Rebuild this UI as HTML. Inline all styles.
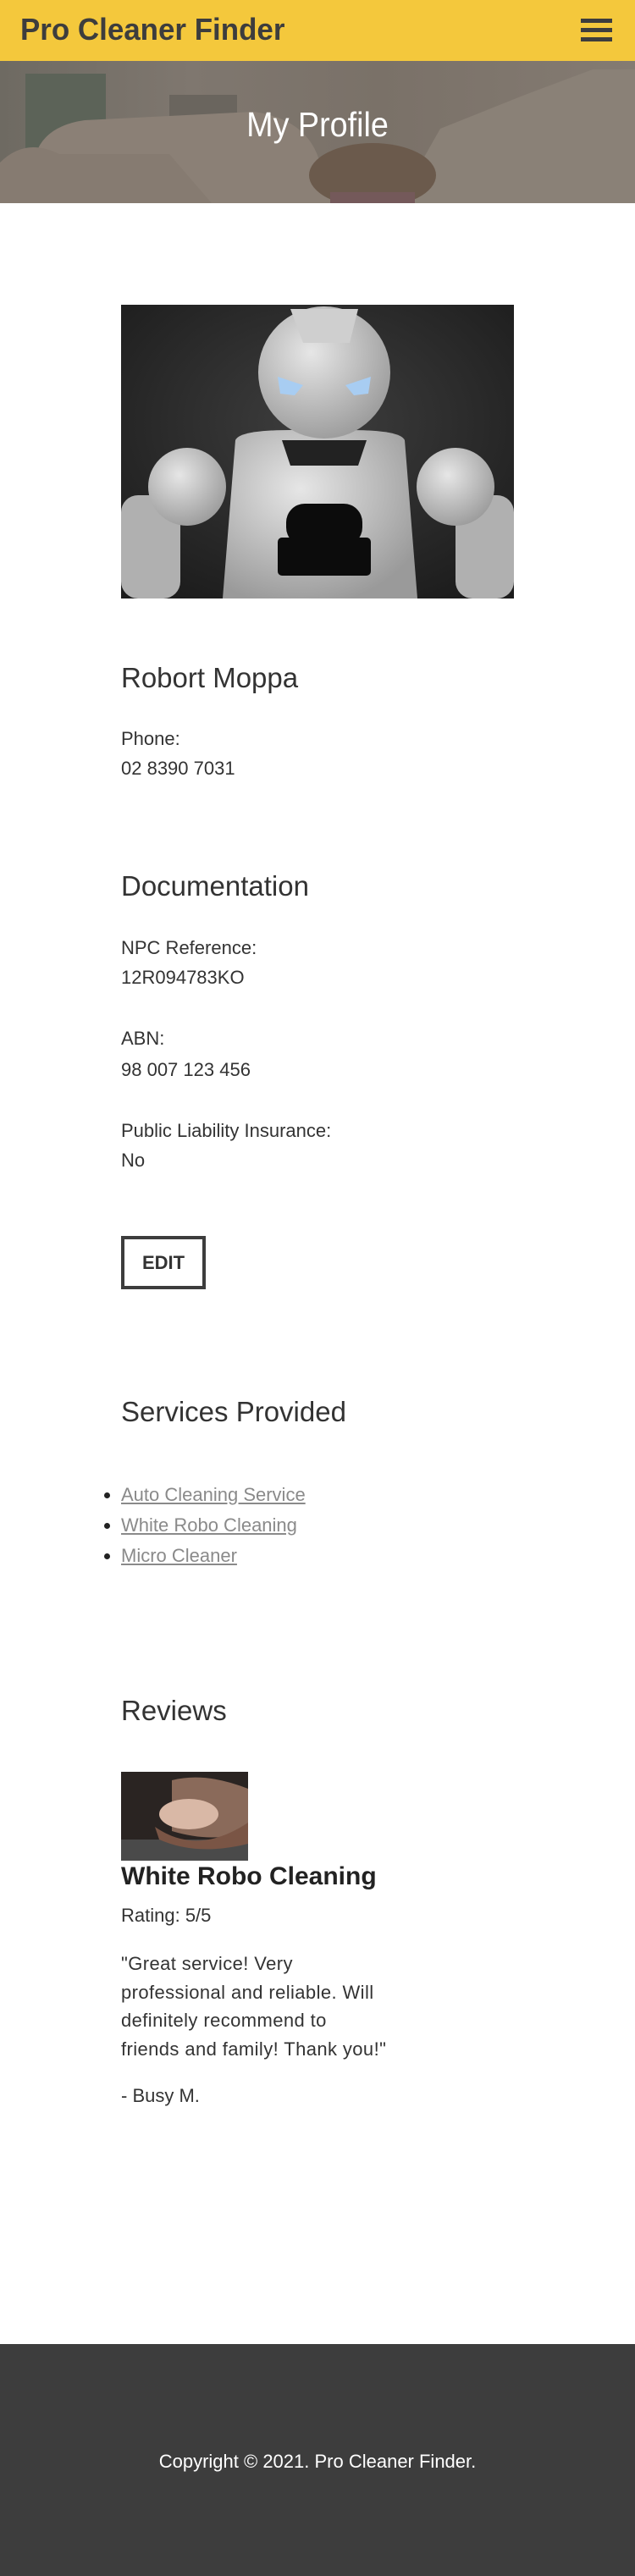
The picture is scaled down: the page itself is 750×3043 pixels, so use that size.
<!DOCTYPE html>
<html><head><meta charset="utf-8"><style>
*{margin:0;padding:0;box-sizing:border-box}
body{width:750px;height:3043px;position:relative;font-family:"Segoe UI","Liberation Sans",sans-serif;color:#333;background:#fff;overflow:hidden}
.abs{position:absolute;white-space:nowrap}
header{position:absolute;left:0;top:0;width:750px;height:72px;background:#f4c83c}
.logo{left:24px;top:14px;font-size:36px;font-weight:bold;color:#3d3d3d;transform:scaleX(.97);transform-origin:left}
.hb{position:absolute;left:686px;width:37px;height:5px;background:#3d3d3d}
.hero{position:absolute;left:0;top:72px;width:750px;height:168px;background:linear-gradient(90deg,#6e6a62 0%,#7f776f 30%,#7a7168 60%,#847b72 100%);overflow:hidden}
.t{font-size:22px;color:#333}
h2{position:absolute;font-size:33px;font-weight:normal;color:#333;white-space:nowrap}
a{color:#8a8a8a;text-decoration:underline}
</style></head><body>
<header>
<div class="abs logo">Pro Cleaner Finder</div>
<div class="hb" style="top:22px"></div><div class="hb" style="top:33px"></div><div class="hb" style="top:44px"></div>
</header>
<div class="hero">
<svg width="750" height="168" style="position:absolute;left:0;top:0">
<rect x="30" y="15" width="95" height="120" fill="#5c6358"/>
<rect x="200" y="40" width="80" height="60" fill="#6a655e"/>
<path d="M40 150 Q30 80 100 70 L300 60 Q370 70 380 130 L400 168 L20 168Z" fill="#8b8076"/>
<path d="M0 168 L0 120 Q30 90 70 110 L200 110 L250 168Z" fill="#867b71"/>
<path d="M470 168 L520 80 L620 40 L700 10 L750 10 L750 168Z" fill="#8a8177"/>
<ellipse cx="440" cy="135" rx="75" ry="38" fill="#6b5a4c"/>
<rect x="390" y="155" width="100" height="13" fill="#74595a"/>
</svg>
<div class="abs" style="left:0;width:750px;text-align:center;top:52px;font-size:41px;color:#fff;transform:scaleX(.92)">My Profile</div>
</div>

<svg style="position:absolute;left:143px;top:360px" width="464" height="347" viewBox="0 0 464 347">
<defs><radialGradient id="bg" cx=".5" cy=".4" r=".7"><stop offset="0" stop-color="#3e3e3e"/><stop offset="1" stop-color="#1c1c1c"/></radialGradient>
<radialGradient id="w" cx=".4" cy=".35" r=".7"><stop offset="0" stop-color="#e6e6e6"/><stop offset="1" stop-color="#9a9a9a"/></radialGradient></defs>
<rect width="464" height="347" fill="url(#bg)"/>
<rect x="0" y="225" width="70" height="122" rx="20" fill="#b0b0b0"/>
<rect x="395" y="225" width="69" height="122" rx="20" fill="#b0b0b0"/>
<path d="M135 160 Q140 148 200 148 L270 148 Q330 148 335 160 L350 347 L120 347Z" fill="url(#w)"/>
<circle cx="78" cy="215" r="46" fill="url(#w)"/>
<circle cx="395" cy="215" r="46" fill="url(#w)"/>
<circle cx="240" cy="80" r="78" fill="url(#w)"/>
<path d="M200 5 L280 5 L270 45 L215 45Z" fill="#cfcfcf"/>
<path d="M185 85 L215 95 L205 107 L188 105Z" fill="#a8cdf2"/>
<path d="M295 85 L265 95 L275 107 L292 105Z" fill="#a8cdf2"/>
<path d="M190 160 L290 160 L280 190 L200 190Z" fill="#222"/>
<rect x="195" y="235" width="90" height="50" rx="22" fill="#0c0c0c"/>
<rect x="185" y="275" width="110" height="45" rx="5" fill="#0c0c0c"/>
</svg>

<h2 style="left:143px;top:782px">Robort Moppa</h2>
<div class="abs t" style="left:143px;top:860px">Phone:</div>
<div class="abs t" style="left:143px;top:895px">02 8390 7031</div>

<h2 style="left:143px;top:1028px">Documentation</h2>
<div class="abs t" style="left:143px;top:1107px">NPC Reference:</div>
<div class="abs t" style="left:143px;top:1142px">12R094783KO</div>
<div class="abs t" style="left:143px;top:1214px">ABN:</div>
<div class="abs t" style="left:143px;top:1251px">98 007 123 456</div>
<div class="abs t" style="left:143px;top:1323px">Public Liability Insurance:</div>
<div class="abs t" style="left:143px;top:1358px">No</div>

<div class="abs" style="left:143px;top:1460px;width:100px;height:63px;border:4px solid #3d3d3d;font-weight:bold;font-size:22px;color:#333;text-align:center;line-height:55px">EDIT</div>

<h2 style="left:143px;top:1649px">Services Provided</h2>
<ul style="position:absolute;left:143px;top:1748px;font-size:22px;line-height:36px;list-style:disc;color:#222">
<li><a>Auto Cleaning Service</a></li>
<li><a>White Robo Cleaning</a></li>
<li><a>Micro Cleaner</a></li>
</ul>

<h2 style="left:143px;top:2002px">Reviews</h2>
<svg style="position:absolute;left:143px;top:2093px" width="150" height="105">
<rect width="150" height="105" fill="#2a2422"/>
<rect y="80" width="150" height="25" fill="#4a4a4a"/>
<path d="M60 10 Q100 0 150 20 L150 70 Q110 85 60 70Z" fill="#8a6a5a"/>
<ellipse cx="80" cy="50" rx="35" ry="18" fill="#d9b8a6"/>
<path d="M40 65 Q90 100 150 60 L150 85 Q90 100 45 80Z" fill="#7a5545"/>
</svg>
<div class="abs" style="left:143px;top:2200px;font-size:30px;font-weight:bold;color:#222">White Robo Cleaning</div>
<div class="abs t" style="left:143px;top:2250px">Rating: 5/5</div>
<div class="t" style="position:absolute;left:143px;top:2303px;width:400px;line-height:33.5px;white-space:nowrap;letter-spacing:.4px">"Great service! Very<br>professional and reliable. Will<br>definitely recommend to<br>friends and family! Thank you!"</div>
<div class="abs t" style="left:143px;top:2463px">- Busy M.</div>

<div style="position:absolute;left:0;top:2769px;width:750px;height:274px;background:#3d3d3d"></div>
<div class="abs" style="left:0;width:750px;text-align:center;top:2895px;font-size:22px;color:#fff">Copyright © 2021. Pro Cleaner Finder.</div>
</body></html>
